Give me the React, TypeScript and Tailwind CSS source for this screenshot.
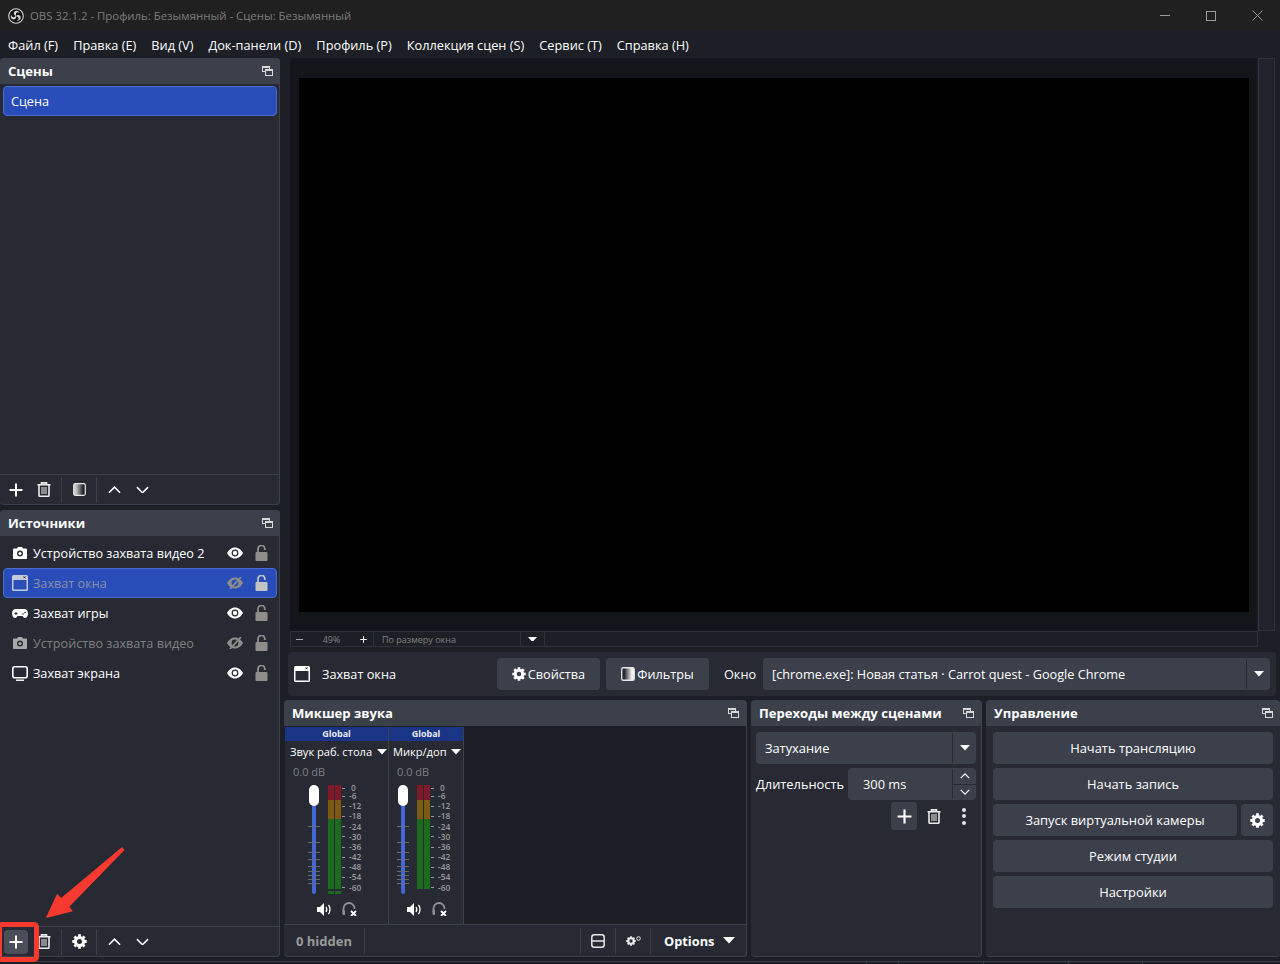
const FONT = "font-['Open_Sans','Noto_Sans',sans-serif]"

function DockIcon() {
    return (
        <svg width="11" height="10" viewBox="0 0 11 10" fill="none" stroke="#d8d8d8" strokeWidth="1">
            <rect x="0.5" y="0.5" width="7" height="5" fill="#3c404b" />
            <rect x="3.5" y="3.5" width="7" height="6" fill="#3c404b" />
            <path d="M0.5 1.5h7M3.5 4.5h7" />
        </svg>
    )
}

function Plus({ size = 14 }: { size?: number }) {
    return (
        <svg width={size} height={size} viewBox="0 0 14 14" stroke="#fff" strokeWidth="2">
            <path d="M7 0.5v13M0.5 7h13" />
        </svg>
    )
}

function Trash() {
    return (
        <svg width="14" height="15" viewBox="0 0 14 15" fill="none" stroke="#ececec" strokeWidth="1.6">
            <path d="M0.5 2.7h13M4.5 2.5V0.9h5v1.6" />
            <path d="M2 3v10.2c0 .7.5 1.1 1.1 1.1h7.8c.6 0 1.1-.4 1.1-1.1V3" />
            <path d="M5 5v7M7 5v7M9 5v7" strokeWidth="1" />
        </svg>
    )
}

function Filter({ size = 13, flip = false }: { size?: number; flip?: boolean }) {
    const id = flip ? "fg-flip" : "fg"
    return (
        <svg width={size} height={size} viewBox="0 0 13 13">
            <defs>
                <linearGradient id={id}>
                    <stop offset="0.2" stopColor={flip ? "#23252c" : "#c8c8c8"} />
                    <stop offset="0.8" stopColor={flip ? "#f0f0f0" : "#23252c"} />
                </linearGradient>
            </defs>
            <rect x="0.7" y="0.7" width="11.6" height="11.6" rx="1.5" fill={`url(#${id})`} stroke="#e8e8e8" strokeWidth="1.2" />
        </svg>
    )
}

function Chevron({ up = false, size = 13 }: { up?: boolean; size?: number }) {
    return (
        <svg width={size} height={size * 0.6} viewBox="0 0 14 8" fill="none" stroke="#fff" strokeWidth="1.7">
            <path d={up ? "M1 7l6-6 6 6" : "M1 1l6 6 6-6"} />
        </svg>
    )
}

function Gear({ size = 14, color = "#fff" }: { size?: number; color?: string }) {
    return (
        <svg width={size} height={size} viewBox="0 0 24 24" fill="none" stroke={color}>
            <circle cx="12" cy="12" r="6.500" strokeWidth="5" />
            {[0, 45, 90, 135].map((a) => (
                <path key={a} d="M12 0.500v23" strokeWidth="4.500" strokeDasharray="5 13" transform={`rotate(${a} 12 12)`} />
            ))}
        </svg>
    )
}

function Caret({ w = 10, color = "#fff" }: { w?: number; color?: string }) {
    return (
        <svg width={w} height={w * 0.55} viewBox="0 0 10 5.500">
            <path d="M0 0h10L5 5.500z" fill={color} />
        </svg>
    )
}

function Eye({ off = false }: { off?: boolean }) {
    const c = off ? "#8d8d8d" : "#fff"
    return (
        <svg width="16" height="12" viewBox="0 0 16 12">
            <path
                fillRule="evenodd"
                fill={c}
                d="M8 0.500c3.600 0 6.500 2.500 8 5.500-1.500 3-4.400 5.500-8 5.500S1.500 9 0 6c1.500-3 4.400-5.500 8-5.500zM8 2.600a3.400 3.400 0 1 0 0 6.800 3.400 3.400 0 0 0 0-6.800z"
            />
            {off ? <path d="M3 12L14 0" stroke={c} strokeWidth="1.800" /> : <circle cx="8" cy="6" r="2.200" fill={c} />}
        </svg>
    )
}

function Lock({ color = "#8f8d89" }: { color?: string }) {
    return (
        <svg width="13" height="16" viewBox="0 0 13 16">
            <path d="M3 7V3.800a3.400 3.400 0 0 1 6.800 0v1.200" fill="none" stroke={color} strokeWidth="1.800" />
            <rect x="0.500" y="7" width="12" height="9" rx="1" fill={color} />
        </svg>
    )
}

function Camera({ color = "#fff" }: { color?: string }) {
    return (
        <svg width="14" height="12" viewBox="0 0 14 12">
            <path
                fill={color}
                fillRule="evenodd"
                d="M4 1.500L5 0h4l1 1.500h3c.6 0 1 .4 1 1V11c0 .6-.4 1-1 1H1c-.6 0-1-.4-1-1V2.500c0-.6.4-1 1-1zM7 3.500a3 3 0 1 0 0 6 3 3 0 0 0 0-6z"
            />
            <circle cx="7" cy="6.500" r="1.600" fill={color} />
        </svg>
    )
}

function WindowIcon({ dim = false, size = 16 }: { dim?: boolean; size?: number }) {
    const c = dim ? "#c6cadb" : "#fff"
    return (
        <svg width={size} height={size} viewBox="0 0 16 16">
            <rect x="0" y="0" width="16" height="16" rx="1.500" fill={c} />
            <rect x="1.500" y="5" width="13" height="9.500" fill={dim ? "#2b4db7" : "#272a33"} />
            <path d="M11.500 1.300l2 2M13.500 1.300l-2 2" stroke="#272a33" strokeWidth="0.900" />
        </svg>
    )
}

function Gamepad() {
    return (
        <svg width="16" height="9" viewBox="0 0 16 9">
            <path
                fill="#fff"
                fillRule="evenodd"
                d="M3.500 0h9C14.500 0 16 1.800 16 4.500S14.500 9 13 9c-1 0-1.700-1-2.500-2h-5C4.700 8 4 9 3 9 1.500 9 0 7.200 0 4.500S1.500 0 3.500 0z"
            />
            <path d="M2.500 4.500h3M4 3v3" stroke="#272a33" strokeWidth="1" />
            <circle cx="11" cy="5" r="0.800" fill="#272a33" />
            <circle cx="13" cy="3.500" r="0.800" fill="#272a33" />
        </svg>
    )
}

function Monitor() {
    return (
        <svg width="16" height="15" viewBox="0 0 16 15" fill="none" stroke="#fff">
            <rect x="0.800" y="0.800" width="14.400" height="11" rx="2" strokeWidth="1.600" />
            <path d="M4 14.200h8" strokeWidth="1.400" />
        </svg>
    )
}

function Speaker() {
    return (
        <svg width="15" height="13" viewBox="0 0 15 13" fill="none">
            <path d="M0 4h3l4-4v13l-4-4H0z" fill="#fff" />
            <path d="M9 4c1 1.500 1 3.500 0 5M11.500 2c2 2.500 2 6.500 0 9" stroke="#fff" strokeWidth="1.300" />
        </svg>
    )
}

function HeadphoneMuted() {
    return (
        <svg width="15" height="14" viewBox="0 0 15 14" fill="none">
            <path d="M1.500 10V6.500a5.500 5.500 0 0 1 11 0V7" stroke="#8f9299" strokeWidth="1.800" />
            <rect x="0.500" y="8" width="2.500" height="5" rx="1" fill="#8f9299" />
            <path d="M9 9l5 5M14 9l-5 5" stroke="#fff" strokeWidth="1.800" />
        </svg>
    )
}

function Layout() {
    return (
        <svg width="14" height="14" viewBox="0 0 14 14" fill="none" stroke="#e8e8e8" strokeWidth="1.500">
            <rect x="0.800" y="0.800" width="12.400" height="12.400" rx="2.500" />
            <path d="M1 7h12" />
        </svg>
    )
}

function MixerGears() {
    return (
        <span className="flex items-start">
            <Gear size={10} color="#e8e8e8" />
            <svg width="5" height="5" viewBox="0 0 5 5" fill="none" stroke="#e8e8e8">
                <circle cx="2.500" cy="2.500" r="1.800" />
            </svg>
        </span>
    )
}

function ObsLogo() {
    return (
        <svg width="16" height="16" viewBox="0 0 16 16" fill="none">
            <circle cx="8" cy="8" r="7.300" fill="#111" stroke="#d6d6d6" strokeWidth="1.100" />
            {[0, 120, 240].map((a) => (
                <path
                    key={a}
                    d="M8 8C5 7 5 3.500 8 2.800c2-.3 3.500 1 3.500 2.200-1-1.200-3-1-3.500.5-.2 1 .5 2 0 2.500z"
                    fill="#d6d6d6"
                    transform={`rotate(${a} 8 8)`}
                />
            ))}
        </svg>
    )
}

function DockHeader({ title }: { title: string }) {
    return (
        <div className="h-[26px] shrink-0 bg-[#3c404b] rounded-t-[4px] flex items-center justify-between pl-2 pr-[7px]">
            <span className="pt-[2px] text-[13.100px] font-bold text-white">{title}</span>
            <DockIcon />
        </div>
    )
}

function Sep() {
    return <div className="w-px h-[26px] bg-[#3c404b]" />
}

function Toolbar({ gear = false, highlight = false }: { gear?: boolean; highlight?: boolean }) {
    return (
        <div className="h-[30px] shrink-0 border-t border-[#3c404b] flex items-center">
            <div className={`w-[24px] h-[24px] ml-[4px] rounded-[4px] flex items-center justify-center ${highlight ? "bg-[#4a4e5b]" : ""}`}>
                <Plus />
            </div>
            <div className="w-[31px] flex justify-center">
                <Trash />
            </div>
            <div className="ml-[2px]">
                <Sep />
            </div>
            <div className="w-[34px] flex justify-center">{gear ? <Gear size={15} /> : <Filter />}</div>
            <Sep />
            <div className="w-[28px] ml-[3px] flex justify-center">
                <Chevron up />
            </div>
            <div className="w-[28px] flex justify-center">
                <Chevron />
            </div>
        </div>
    )
}

const sources = [
    { name: "Устройство захвата видео 2", icon: <Camera />, on: true },
    { name: "Захват окна", icon: <WindowIcon dim />, on: false, sel: true },
    { name: "Захват игры", icon: <Gamepad />, on: true },
    { name: "Устройство захвата видео", icon: <Camera color="#a8a8a8" />, on: false },
    { name: "Захват экрана", icon: <Monitor />, on: true },
]

function SourceRow({ s }: { s: (typeof sources)[number] }) {
    return (
        <div className={`h-[30px] mx-[3px] flex items-center rounded-[4px] ${s.sel ? "bg-[#284cb8] border border-[#4a6ad0]" : ""}`}>
            <div className={`w-[25px] flex justify-center shrink-0 ${s.sel ? "ml-[3px]" : "ml-[4px]"}`}>{s.icon}</div>
            <span className={`ml-[1px] text-[12.650px] flex-1 ${s.on ? "text-white" : s.sel ? "text-[#8a90a8]" : "text-[#808080]"}`}>{s.name}</span>
            <div className="w-[16px] flex justify-center mr-[12px]">
                <Eye off={!s.on} />
            </div>
            <div className={`flex ${s.sel ? "mr-[8px]" : "mr-[9px]"}`}>
                <Lock color={s.sel ? "#c4c4c4" : "#8f8d89"} />
            </div>
        </div>
    )
}

const dbLabels = ["-6", "-12", "-18", "-24", "-30", "-36", "-42", "-48", "-54", "-60"]

function Meter({ tail = false }: { tail?: boolean }) {
    return (
        <div className="flex items-start mt-[-1px]">
            <div className="flex flex-col w-[13px] h-[110px]">
                <div className="flex gap-px h-[104px]">
                    {[0, 1].map((i) => (
                        <div key={i} className="w-[6px] flex flex-col">
                            <div className="h-[15px] bg-[#7e1a28]" />
                            <div className="h-[19px] bg-[#7b5b12]" />
                            <div className="flex-1 bg-[#1c6a1e]" />
                        </div>
                    ))}
                </div>
                {tail && (
                    <div className="flex gap-px mt-[2px] h-[3px]">
                        <div className="w-[6px] bg-[#1c6a1e]" />
                        <div className="w-[6px] bg-[#1c6a1e]" />
                    </div>
                )}
            </div>
            <div className="flex flex-col ml-[1px]">
                <div className="h-[6px] flex items-center text-[8.300px] font-semibold text-[#9a9a9a] leading-none">
                    <span className="w-[3px] h-px bg-[#9a9a9a] mr-[6px]" />
                    0
                </div>
                {dbLabels.map((d) => (
                    <div key={d} className="h-[10.200px] flex items-center text-[8.300px] font-semibold text-[#9a9a9a] leading-none">
                        <span className="w-[3px] h-px bg-[#9a9a9a] mr-[4px]" />
                        {d}
                    </div>
                ))}
            </div>
        </div>
    )
}

function SliderTicks() {
    return (
        <svg width="12" height="70" viewBox="0 0 12 70" stroke="#666a73">
            {[0, 16, 26, 33, 40, 45, 49, 53, 57].map((y) => (
                <path key={y} d={`M0 ${y + 0.5}h12`} />
            ))}
        </svg>
    )
}

function Channel({ name, w, nameBox, sliderBox, footerBox, tail }: { name: string; w: string; nameBox: string; sliderBox: string; footerBox: string; tail?: boolean }) {
    return (
        <div className={`${w} h-full bg-[#272a33] border-r border-[#3c404b] flex flex-col`}>
            <div className="h-[14px] bg-[#1a3585] flex items-center justify-center text-[9px] font-bold text-[#e6e9f2]">Global</div>
            <div className={`${nameBox} h-[22px] flex items-center justify-between text-[11.100px] text-white whitespace-nowrap`}>
                <span>{name}</span>
                <Caret />
            </div>
            <div className="h-[15px] mt-[2px] pl-[8px] text-[11px] text-[#808080] flex items-center">0.0 dB</div>
            <div className="flex mt-[6px] h-[110px]">
                <div className={`relative w-[12px] h-[108px] flex justify-center ${sliderBox}`}>
                    <div className="w-[4px] h-full bg-[#4267d8] rounded-full mr-[1px]" />
                    <div className="absolute top-[-1px] left-px w-[10px] h-[21px] rounded-[5px] bg-white" />
                    <div className="absolute left-0 top-[40px]">
                        <SliderTicks />
                    </div>
                </div>
                <div className="ml-[8px]">
                    <Meter tail={tail} />
                </div>
            </div>
            <div className={`flex mt-[6px] gap-[10px] items-center ${footerBox}`}>
                <Speaker />
                <HeadphoneMuted />
            </div>
        </div>
    )
}

function Btn({ label, className = "" }: { label: string; className?: string }) {
    return (
        <div className={`h-[32px] pt-[2px] bg-[#3c404b] rounded-[4px] flex items-center justify-center text-[12.900px] text-white ${className}`}>
            {label}
        </div>
    )
}

export default function App() {
    return (
        <div className={`relative w-[1280px] h-[964px] overflow-hidden bg-[#1d1f26] flex flex-col ${FONT}`}>
            {/* title bar */}
            <div className="h-[31px] shrink-0 bg-[#202020] flex items-center pl-[8px] text-[11.400px] text-[#7c7c7c] rounded-t-[8px]">
                <ObsLogo />
                <span className="ml-[6px] flex-1">OBS 32.1.2 - Профиль: Безымянный - Сцены: Безымянный</span>
                <div className="flex items-center">
                    <div className="w-[46px] flex justify-center">
                        <div className="w-[10px] h-px bg-[#9a9a9a]" />
                    </div>
                    <div className="w-[46px] flex justify-center">
                        <div className="w-[10px] h-[10px] border border-[#9a9a9a]" />
                    </div>
                    <div className="w-[46px] flex justify-center">
                        <svg width="11" height="11" viewBox="0 0 11 11" stroke="#9a9a9a">
                            <path d="M0.500 0.500l10 10M10.500 0.500l-10 10" />
                        </svg>
                    </div>
                </div>
            </div>

            {/* menu */}
            <div className="h-[27px] pt-[2px] shrink-0 flex items-center pl-[8px] gap-[15px] text-[12.770px] text-white">
                {["Файл (F)", "Правка (E)", "Вид (V)", "Док-панели (D)", "Профиль (P)", "Коллекция сцен (S)", "Сервис (T)", "Справка (H)"].map((m) => (
                    <span key={m}>{m}</span>
                ))}
            </div>

            <div className="flex-1 min-h-0 flex">
                {/* left column */}
                <div className="w-[280px] shrink-0 flex flex-col gap-[5px]">
                    <div className="h-[447px] bg-[#272a33] shadow-[inset_-1px_0_0_#3c404b] border-b border-[#3c404b] rounded-[4px] flex flex-col">
                        <DockHeader title="Сцены" />
                        <div className="flex-1 pt-[2px] px-[3px]">
                            <div className="h-[30px] bg-[#284cb8] border border-[#4a6ad0] rounded-[4px] flex items-center pl-[7px] text-[12.650px] text-white">
                                Сцена
                            </div>
                        </div>
                        <Toolbar />
                    </div>
                    <div className="h-[447px] bg-[#272a33] shadow-[inset_-1px_0_0_#3c404b] border-b border-[#3c404b] rounded-[4px] flex flex-col">
                        <DockHeader title="Источники" />
                        <div className="flex-1 pt-[2px]">
                            {sources.map((s) => (
                                <SourceRow key={s.name} s={s} />
                            ))}
                        </div>
                        <Toolbar gear highlight />
                    </div>
                </div>

                {/* right side */}
                <div className="flex-1 min-w-0 flex flex-col pl-[4px]">
                    <div className="h-[573px] shrink-0 flex pl-[6px] pr-[5px]">
                        <div className="w-[968px] bg-[#14151a] pt-[20px] pl-[9px]">
                            <div className="w-[950px] h-[534px] bg-black" />
                        </div>
                        <div className="w-[17px] ml-px bg-[#20232c] border border-[#2e313a]" />
                    </div>
                    <div className="h-[16px] shrink-0 ml-[6px] w-[968px] border border-[#2e313a] flex items-center text-[9px] text-[#808080]">
                        <div className="w-[83px] flex items-center justify-between pl-[5px] pr-[6px] border-r border-[#2e313a] h-full">
                            <span className="w-[7px] h-px bg-[#aaa]" />
                            <span className="pt-[2px]">49%</span>
                            <Plus size={7} />
                        </div>
                        <div className="w-[147px] pl-[8px] pt-[2px] border-r border-[#2e313a] h-full flex items-center">По размеру окна</div>
                        <div className="w-[24px] flex justify-center border-r border-[#2e313a] h-full items-center">
                            <Caret w={9} />
                        </div>
                    </div>

                    {/* context bar */}
                    <div className="h-[44px] shrink-0 mt-[5px] ml-[4px] mr-[4px] bg-[#272a33] rounded-[4px] flex items-center pl-[6px] text-[12.700px] text-white">
                        <WindowIcon />
                        <span className="ml-[12px] pt-[2px] w-[175px]">Захват окна</span>
                        <div className="w-[103px] h-[32px] bg-[#3c404b] rounded-[4px] flex items-center justify-center gap-[2px]">
                            <Gear size={14} />
                            <span className="pt-[2px]">Свойства</span>
                        </div>
                        <div className="w-[103px] h-[32px] ml-[6px] bg-[#3c404b] rounded-[4px] flex items-center justify-center gap-[2px]">
                            <Filter size={14} flip />
                            <span className="pt-[2px]">Фильтры</span>
                        </div>
                        <span className="ml-[15px] pt-[2px]">Окно</span>
                        <div className="ml-[7px] w-[507px] h-[32px] bg-[#3c404b] rounded-[4px] flex items-center pl-[9px]">
                            <span className="flex-1 pt-[2px]">[chrome.exe]: Новая статья · Carrot quest - Google Chrome</span>
                            <div className="w-[24px] h-[30px] border-l border-[#272a33] flex items-center justify-center">
                                <Caret />
                            </div>
                        </div>
                    </div>

                    {/* bottom docks */}
                    <div className="flex mt-[4px] gap-[4px] h-[257px]">
                        <div className="w-[463px] bg-[#272a33] rounded-[4px] flex flex-col border-b border-r border-[#3c404b]">
                            <DockHeader title="Микшер звука" />
                            <div className="h-[198px] shrink-0 pl-px pt-px flex bg-[#1d1f26]">
                                <Channel name="Звук раб. стола" w="w-[104px]" nameBox="w-[97px] ml-[5px]" sliderBox="ml-[23px]" footerBox="ml-[32px]" tail />
                                <Channel name="Микр/доп" w="w-[75px]" nameBox="w-[68px] ml-[4px]" sliderBox="ml-[8px]" footerBox="ml-[18px]" />
                            </div>
                            <div className="flex-1 border-t border-[#3c404b] flex items-center text-[13px] font-bold">
                                <div className="w-[81px] pl-[12px] pt-[2px] text-[#9a9a9a] h-[26px] flex items-center border-r border-[#3c404b]">0 hidden</div>
                                <div className="flex-1 h-[26px]" />
                                <div className="h-[26px] w-[35px] border-l border-[#3c404b] flex items-center justify-center">
                                    <Layout />
                                </div>
                                <div className="h-[26px] w-[35px] border-l border-[#3c404b] flex items-center justify-center">
                                    <MixerGears />
                                </div>
                                <div className="h-[26px] w-[96px] border-l border-[#3c404b] flex items-center pl-[13px] text-white text-[12.800px]">
                                    <span className="pt-[2px]">Options</span>
                                    <span className="ml-[9px]">
                                        <Caret w={12} />
                                    </span>
                                </div>
                            </div>
                        </div>

                        <div className="w-[231px] bg-[#272a33] rounded-[4px] flex flex-col border-b border-r border-[#3c404b]">
                            <DockHeader title="Переходы между сценами" />
                            <div className="px-[5px] pt-[6px] text-[12.850px] text-white">
                                <div className="h-[32px] bg-[#3c404b] rounded-[4px] flex items-center pl-[9px]">
                                    <span className="flex-1 pt-[2px]">Затухание</span>
                                    <div className="w-[24px] h-[30px] border-l border-[#272a33] flex items-center justify-center">
                                        <Caret />
                                    </div>
                                </div>
                                <div className="flex items-center mt-[4px]">
                                    <span className="w-[92px] pt-[2px]">Длительность</span>
                                    <div className="flex-1 h-[32px] bg-[#3c404b] rounded-[4px] flex items-center pl-[15px]">
                                        <span className="flex-1 pt-[2px]">300 ms</span>
                                        <div className="w-[24px] h-[30px] border-l border-[#272a33] flex flex-col">
                                            <div className="flex-1 flex items-center justify-center border-b border-[#272a33]">
                                                <Chevron up size={10} />
                                            </div>
                                            <div className="flex-1 flex items-center justify-center">
                                                <Chevron size={10} />
                                            </div>
                                        </div>
                                    </div>
                                </div>
                                <div className="flex items-center justify-end mt-[2px] pr-[8px]">
                                    <div className="w-[26px] h-[28px] bg-[#3c404b] rounded-[4px] flex items-center justify-center">
                                        <Plus size={15} />
                                    </div>
                                    <div className="w-[34px] flex justify-center">
                                        <Trash />
                                    </div>
                                    <div className="w-[8px] ml-[9px] flex flex-col items-center gap-[2.500px]">
                                        <span className="w-[4px] h-[4px] rounded-full bg-[#e4e4e4]" />
                                        <span className="w-[4px] h-[4px] rounded-full bg-[#e4e4e4]" />
                                        <span className="w-[4px] h-[4px] rounded-full bg-[#e4e4e4]" />
                                    </div>
                                </div>
                            </div>
                        </div>

                        <div className="flex-1 bg-[#272a33] rounded-[4px] flex flex-col border-b border-[#3c404b]">
                            <DockHeader title="Управление" />
                            <div className="pl-[7px] pr-[7px] pt-[6px] flex flex-col gap-[4px]">
                                <Btn label="Начать трансляцию" />
                                <Btn label="Начать запись" />
                                <div className="flex gap-[4px]">
                                    <Btn label="Запуск виртуальной камеры" className="flex-1" />
                                    <div className="w-[32px] h-[32px] bg-[#3c404b] rounded-[4px] flex items-center justify-center">
                                        <Gear size={15} />
                                    </div>
                                </div>
                                <Btn label="Режим студии" />
                                <Btn label="Настройки" />
                            </div>
                        </div>
                    </div>
                </div>
            </div>

            {/* status bar */}
            <div className="h-[7px] shrink-0 pt-[4px]">
                <div className="h-[3px] border-t border-[#3c404b] flex">
                    <div className="w-[866px]" />
                    <div className="w-px bg-[#3c404b]" />
                    <div className="w-[31px]" />
                    <div className="w-px bg-[#3c404b]" />
                    <div className="w-[84px]" />
                    <div className="w-px bg-[#3c404b]" />
                    <div className="w-[84px]" />
                    <div className="w-px bg-[#3c404b]" />
                    <div className="w-[73px]" />
                    <div className="w-px bg-[#3c404b]" />
                </div>
            </div>

            {/* annotation over the page */}
            <div className="absolute left-[-3px] top-[922px] w-[42px] h-[40px] border-[5px] border-[#f73a30] rounded-[5px]" />
            <svg className="absolute left-[40px] top-[840px]" width="90" height="85" viewBox="0 0 90 85">
                <path d="M82 8L21 59l-3.700-4L7 77l24.700-6.300-3.400-4L83.500 10z" fill="#f73a30" stroke="#f73a30" strokeWidth="1.500" strokeLinejoin="round" />
            </svg>
        </div>
    )
}
